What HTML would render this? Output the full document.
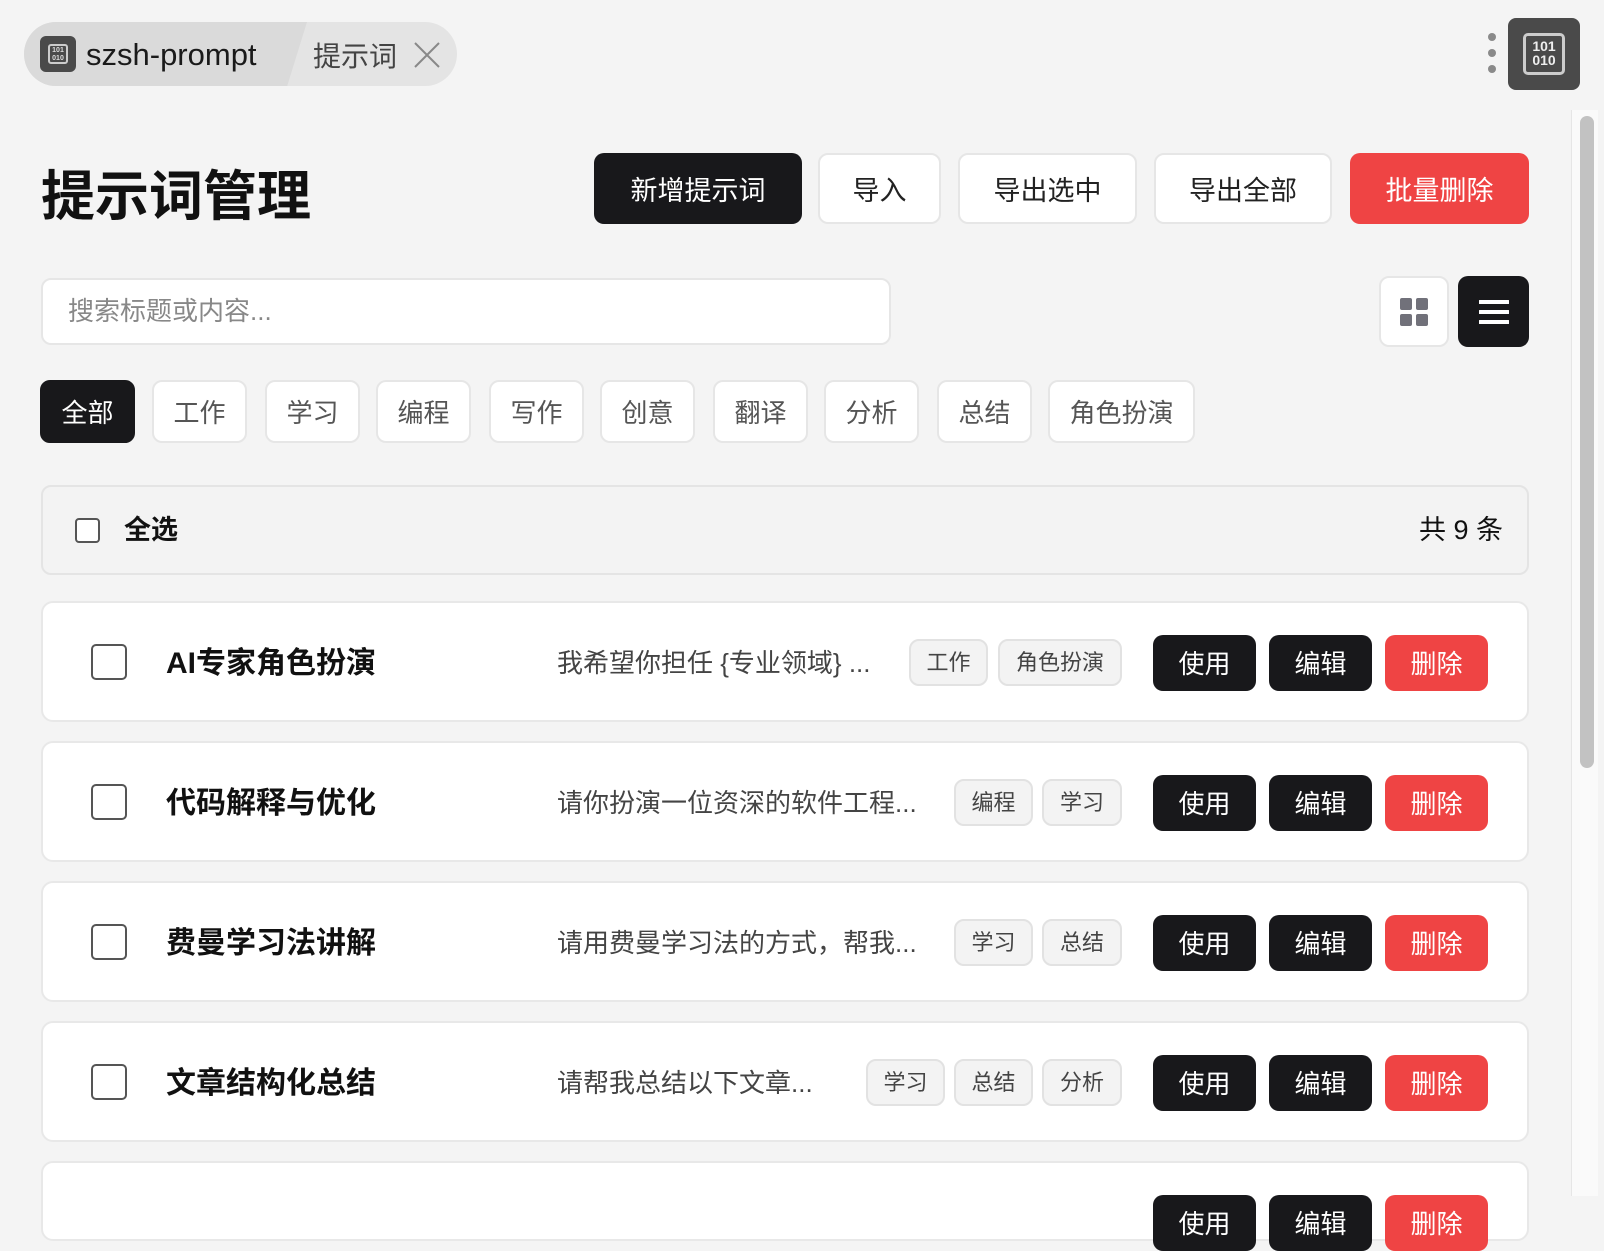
<!DOCTYPE html>
<html><head><meta charset="utf-8"><style>
*{box-sizing:border-box;margin:0;padding:0}
body{width:1604px;height:1196px;overflow:hidden;background:#f4f4f4;font-family:"Liberation Sans","Noto Sans CJK SC",sans-serif;color:#111;position:relative}
.abs{position:absolute}
.pill{left:24px;top:22px;width:433px;height:64px;border-radius:32px;background:#e4e4e4;overflow:hidden}
.pill .l{position:absolute;left:0;top:0;width:283px;height:64px;background:#dadada;clip-path:polygon(0 0,100% 0,93% 100%,0 100%)}
.btn{position:absolute;display:flex;align-items:center;justify-content:center;border-radius:10px;font-size:27px}
.dark{background:#18181b;color:#fff}
.light{background:#fff;border:2px solid #e6e6e6;color:#222}
.red{background:#ef4444;color:#fff}
.chip{position:absolute;top:380px;height:63px;width:95px;border-radius:10px;background:#fff;border:2px solid #e6e6e6;color:#555;font-size:26px;display:flex;align-items:center;justify-content:center}
.card{position:absolute;left:41px;width:1488px;height:121px;background:#fff;border:2px solid #e8e8e8;border-radius:12px}
.cb{position:absolute;left:48px;top:41px;width:36px;height:36px;border:2px solid #555;border-radius:5px;background:#fff}
.tt{position:absolute;left:123px;top:2px;line-height:117px;font-size:30px;font-weight:bold}
.ds{position:absolute;left:514px;top:2px;line-height:117px;font-size:26px;color:#444}
.tag{position:absolute;top:36px;height:47px;border-radius:10px;background:#f3f3f3;border:2px solid #e2e2e2;font-size:22px;color:#444;display:flex;align-items:center;justify-content:center;padding-bottom:3px}
.ab{position:absolute;top:32px;width:103px;height:56px;border-radius:10px;font-size:26px;display:flex;align-items:center;justify-content:center;padding-bottom:2px}
</style></head><body>
<div class="abs pill"><div class="l"></div></div>
<div class="abs" style="left:40px;top:36px;width:36px;height:36px;border-radius:6px;background:#4a4a4a"><div style="position:absolute;left:8px;top:8px;width:20px;height:20px;border:2px solid #ccc;border-radius:3px;font-size:7px;color:#ddd;line-height:8px;text-align:center;font-weight:bold;padding-top:1px">101<br>010</div></div>
<div class="abs" style="left:86px;top:37px;font-size:31px;color:#1a1a1a">szsh-prompt</div>
<div class="abs" style="left:313px;top:35px;font-size:28px;color:#444">提示词</div>
<svg class="abs" style="left:412px;top:40px" width="30" height="30"><path d="M3 3L27 27M27 3L3 27" stroke="#888" stroke-width="2"/></svg>
<div class="abs" style="left:1488px;top:33px;width:8px;height:8px;border-radius:50%;background:#8a8a8a"></div>
<div class="abs" style="left:1488px;top:49px;width:8px;height:8px;border-radius:50%;background:#8a8a8a"></div>
<div class="abs" style="left:1488px;top:65px;width:8px;height:8px;border-radius:50%;background:#8a8a8a"></div>
<div class="abs" style="left:1508px;top:18px;width:72px;height:72px;border-radius:8px;background:#4a4a4a"><div style="position:absolute;left:15px;top:15px;width:42px;height:42px;border:3px solid #ccc;border-radius:5px;font-size:14px;color:#eee;line-height:14px;text-align:center;font-weight:bold;padding-top:3px">101<br>010</div></div>
<div class="abs" style="left:1571px;top:110px;width:27px;height:1086px;background:#fafafa;border-left:1px solid #e6e6e6"></div>
<div class="abs" style="left:1580px;top:116px;width:14px;height:652px;border-radius:7px;background:#c2c2c2"></div>

<div class="abs" style="left:41px;top:152px;font-size:54px;font-weight:bold;color:#111">提示词管理</div>
<div class="btn dark" style="left:594px;top:153px;width:208px;height:71px">新增提示词</div>
<div class="btn light" style="left:818px;top:153px;width:123px;height:71px">导入</div>
<div class="btn light" style="left:958px;top:153px;width:179px;height:71px">导出选中</div>
<div class="btn light" style="left:1154px;top:153px;width:178px;height:71px">导出全部</div>
<div class="btn red" style="left:1350px;top:153px;width:179px;height:71px">批量删除</div>

<div class="abs" style="left:41px;top:278px;width:850px;height:67px;background:#fff;border:2px solid #e6e6e6;border-radius:10px;font-size:26px;color:#888;line-height:63px;padding-left:25px">搜索标题或内容...</div>
<div class="btn light" style="left:1379px;top:276px;width:70px;height:71px">
<svg width="28" height="28"><rect x="0" y="0" width="12" height="12" rx="2" fill="#71717a"/><rect x="16" y="0" width="12" height="12" rx="2" fill="#71717a"/><rect x="0" y="16" width="12" height="12" rx="2" fill="#71717a"/><rect x="16" y="16" width="12" height="12" rx="2" fill="#71717a"/></svg></div>
<div class="btn dark" style="left:1458px;top:276px;width:71px;height:71px">
<svg width="30" height="26"><path d="M1 3H29M1 13H29M1 23H29" stroke="#fff" stroke-width="4" stroke-linecap="round"/></svg></div>

<div class="chip" style="left:40px;background:#18181b;color:#fff;border-color:#18181b">全部</div>
<div class="chip" style="left:152px">工作</div>
<div class="chip" style="left:265px">学习</div>
<div class="chip" style="left:376px">编程</div>
<div class="chip" style="left:489px">写作</div>
<div class="chip" style="left:600px">创意</div>
<div class="chip" style="left:713px">翻译</div>
<div class="chip" style="left:824px">分析</div>
<div class="chip" style="left:937px">总结</div>
<div class="chip" style="left:1048px;width:147px">角色扮演</div>

<div class="abs" style="left:41px;top:485px;width:1488px;height:90px;background:#f3f3f3;border:2px solid #e4e4e4;border-radius:10px">
<div style="position:absolute;left:32px;top:31px;width:25px;height:25px;border:2px solid #555;border-radius:4px;background:#fff"></div>
<div style="position:absolute;left:81px;top:0;line-height:86px;font-size:27px;font-weight:bold">全选</div>
<div style="position:absolute;right:24px;top:0;line-height:86px;font-size:27px">共 9 条</div>
</div>

<div class="card" style="top:601px"><div class="cb"></div><div class="tt">AI专家角色扮演</div><div class="ds">我希望你担任 {专业领域} ...</div>
<div class="tag" style="left:866px;width:79px">工作</div><div class="tag" style="left:955px;width:124px">角色扮演</div>
<div class="ab dark" style="left:1110px">使用</div><div class="ab dark" style="left:1226px">编辑</div><div class="ab red" style="left:1342px">删除</div></div>

<div class="card" style="top:741px"><div class="cb"></div><div class="tt">代码解释与优化</div><div class="ds">请你扮演一位资深的软件工程...</div>
<div class="tag" style="left:911px;width:79px">编程</div><div class="tag" style="left:999px;width:80px">学习</div>
<div class="ab dark" style="left:1110px">使用</div><div class="ab dark" style="left:1226px">编辑</div><div class="ab red" style="left:1342px">删除</div></div>

<div class="card" style="top:881px"><div class="cb"></div><div class="tt">费曼学习法讲解</div><div class="ds">请用费曼学习法的方式，帮我...</div>
<div class="tag" style="left:911px;width:79px">学习</div><div class="tag" style="left:999px;width:80px">总结</div>
<div class="ab dark" style="left:1110px">使用</div><div class="ab dark" style="left:1226px">编辑</div><div class="ab red" style="left:1342px">删除</div></div>

<div class="card" style="top:1021px"><div class="cb"></div><div class="tt">文章结构化总结</div><div class="ds">请帮我总结以下文章...</div>
<div class="tag" style="left:823px;width:79px">学习</div><div class="tag" style="left:911px;width:79px">总结</div><div class="tag" style="left:999px;width:80px">分析</div>
<div class="ab dark" style="left:1110px">使用</div><div class="ab dark" style="left:1226px">编辑</div><div class="ab red" style="left:1342px">删除</div></div>

<div class="card" style="top:1161px;height:80px"><div class="ab dark" style="left:1110px">使用</div><div class="ab dark" style="left:1226px">编辑</div><div class="ab red" style="left:1342px">删除</div></div>
</body></html>
